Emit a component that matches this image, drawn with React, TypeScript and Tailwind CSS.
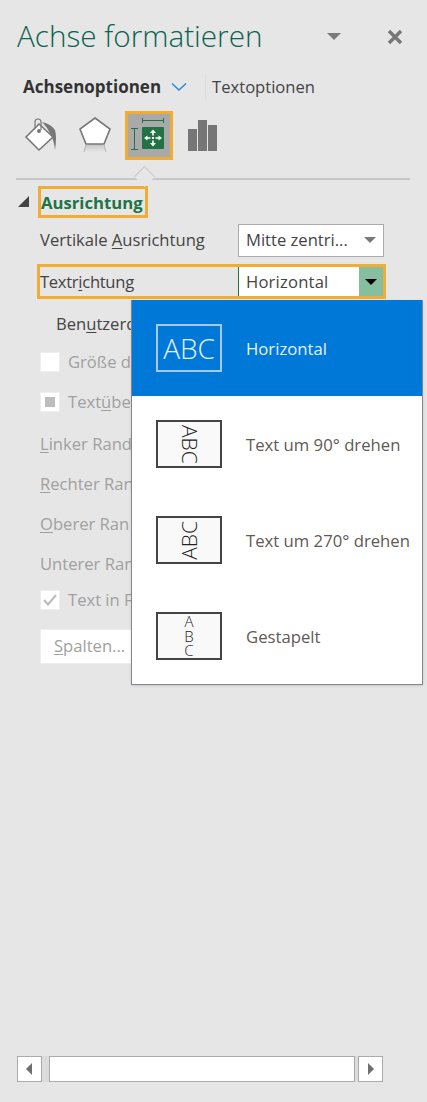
const font = "font-['Open_Sans','Noto_Sans',sans-serif]";

function Bucket() {
  return (
    <svg width="34" height="36" viewBox="0 0 34 36" fill="none">
      <path d="M2 20 L15 7 L29 20 L15 33 Z" fill="#fff" stroke="#777" strokeWidth="1.6" />
      <path d="M11 12 V5 Q11 2 14 2 Q17 2 17 5 V13" stroke="#777" strokeWidth="1.2" />
      <circle cx="15" cy="14" r="2" fill="#777" />
      <path d="M18 5 Q27 7 31 13 Q33 20 31 33 Q30 24 27 18 Q24 11 18 5Z" fill="#777" />
    </svg>
  );
}

function Pentagon() {
  return (
    <svg width="34" height="38" viewBox="0 0 34 38" fill="none">
      <defs>
        <linearGradient id="shadow" x1="0" y1="0" x2="0" y2="1">
          <stop offset="0" stopColor="#c4c4c4" />
          <stop offset="1" stopColor="#e6e6e6" />
        </linearGradient>
      </defs>
      <rect x="7" y="28" width="20" height="8" fill="url(#shadow)" />
      <path d="M17 2 L32 13 L26 28 H8 L2 13 Z" fill="#fff" stroke="#777" strokeWidth="1.6" />
      <path d="M8 28 L6 36 M26 28 L28 36" stroke="#b5b5b5" strokeWidth="1" />
    </svg>
  );
}

function SizeIcon() {
  return (
    <svg width="38" height="36" viewBox="0 0 38 36" fill="none">
      <path d="M12.5 1 V6 M33.5 1 V6 M12.5 3.5 H33.5 M1 11.5 H8 M1 32.5 H8 M4.5 11.5 V32.5" stroke="#217346" strokeWidth="1" />
      <rect x="12" y="10" width="22" height="22" rx="1" fill="#217346" />
      <path d="M23 15 V18.5 M23 23.5 V27 M16 21 H20.5 M25.5 21 H30" stroke="#fff" strokeWidth="1.6" />
      <path d="M23 12.5 L20 16 H26 Z M23 29.5 L20 26 H26 Z M14 21 L17.5 18.5 V23.5 Z M32 21 L28.5 18.5 V23.5 Z" fill="#fff" />
      <rect x="22" y="20" width="2" height="2" fill="#fff" />
    </svg>
  );
}

function Bars() {
  return (
    <svg width="30" height="32" viewBox="0 0 30 32" fill="#767676">
      <rect x="0" y="10" width="9" height="22" />
      <rect x="10" y="1" width="9" height="31" />
      <rect x="20" y="6" width="9" height="26" />
    </svg>
  );
}

function Caret({ className }: { className: string }) {
  return <span className={`h-0 w-0 border-x-[6px] border-t-[6px] border-x-transparent ${className}`} />;
}

function MutedRow({ children }: { children: React.ReactNode }) {
  return <div className="flex h-10 items-center whitespace-nowrap pl-10 text-[#a0a0a0]">{children}</div>;
}

function Check({ children, label }: { children?: React.ReactNode; label: React.ReactNode }) {
  return (
    <div className="flex h-10 items-center whitespace-nowrap pl-10 text-[#a0a0a0]">
      <span className="mr-[8px] flex h-[20px] w-[20px] items-center justify-center border border-[#eeeeee] bg-white">{children}</span>
      <span>{label}</span>
    </div>
  );
}

function MenuItem({ label, active, children }: { label: string; active?: boolean; children: React.ReactNode }) {
  return (
    <div className={`flex h-[96px] items-center pl-[24px] ${active ? "bg-[#0078d7] text-[#e6f0fa]" : "bg-white text-[#5f5a55]"}`}>
      <div className={`flex h-[48px] w-[66px] shrink-0 items-center justify-center overflow-hidden border-2 ${active ? "border-[#a5cbec]" : "border-[#444] bg-[#f9f9f9]"}`}>
        {children}
      </div>
      <span className="ml-[24px] whitespace-nowrap pt-[1px] text-[16.7px]">{label}</span>
    </div>
  );
}

export default function App() {
  return (
    <div className={`relative flex h-[1102px] w-[427px] flex-col overflow-hidden bg-[#e6e6e6] text-[16.6px] text-[#444] ${font}`}>
      {/* header */}
      <div className="flex h-[72px] items-center pl-[17px] pt-[1px]">
        <h1 className="w-[246px] whitespace-nowrap text-[29.7px] font-light text-[#0b6350]">Achse formatieren</h1>
        <Caret className="ml-[64px] border-t-[#7a7a7a] border-x-[7px] border-t-[7px]" />
        <svg className="ml-[46px]" width="16" height="16" viewBox="0 0 16 16">
          <path d="M2 2 L14 14 M14 2 L2 14" stroke="#777" strokeWidth="3.4" />
        </svg>
      </div>

      {/* tabs */}
      <div className="flex h-[30px] items-center pl-[23px]">
        <span className="text-[17px] font-bold text-[#333]">Achsenoptionen</span>
        <svg className="ml-[10px]" width="16" height="10" viewBox="0 0 16 10" fill="none">
          <path d="M1 1.5 L8 8 L15 1.5" stroke="#2b88d8" strokeWidth="1.5" />
        </svg>
        <span className="ml-[18px] h-[26px] w-px bg-[#dcdcdc]" />
        <span className="ml-[6px] text-[#444]">Textoptionen</span>
      </div>

      {/* icon tabs */}
      <div className="mt-[8px] flex h-[50px] items-center pl-[24px]">
        <Bucket />
        <span className="ml-[20px]"><Pentagon /></span>
        <span className="ml-[13px] flex h-[49px] w-[48px] items-center justify-center border-[3px] border-[#f0ad36] bg-[#a9a9a9]">
          <SizeIcon />
        </span>
        <span className="ml-[15px]"><Bars /></span>
      </div>

      {/* divider with notch */}
      <div className="relative mx-[16px] mt-[18px] h-[2px] w-[394px] bg-[#c6c6c6]">
        <span className="absolute left-[121px] top-[-9px] h-[15px] w-[15px] rotate-45 border-l border-t border-[#c6c6c6] bg-[#e6e6e6]" />
      </div>

      {/* section */}
      <div className="mt-[5px] flex h-[33px] items-center pl-[18px]">
        <span className="h-0 w-0 border-b-[11px] border-l-[11px] border-b-[#444] border-l-transparent" />
        <span className="ml-[9px] flex h-[32px] w-[110px] items-center whitespace-nowrap border-[3px] border-[#f0ad36] pt-[3px] text-[16.7px] font-bold text-[#217346]">Ausrichtung</span>
      </div>

      <div className="mt-[5px] flex h-[34px] items-center pl-[40px]">
        <span className="w-[198px] whitespace-nowrap">Vertikale <u className="underline-offset-2">A</u>usrichtung</span>
        <div className="flex h-[33px] w-[146px] items-center justify-between border border-[#ababab] bg-white pl-[7px] pr-[7px]">
          <span className="whitespace-nowrap">Mitte zentri...</span>
          <Caret className="border-t-[#7a7a7a] border-x-[5px] border-t-[6px]" />
        </div>
      </div>

      <div className="ml-[37px] mt-[7px] flex h-[35px] w-[349px] items-stretch border-[3px] border-[#f0ad36]">
        <span className="flex w-[198px] items-center whitespace-nowrap pt-[2px] tracking-[-0.3px]">Textr<u className="underline-offset-2">i</u>chtung</span>
        <div className="flex flex-1 items-center border-l border-[#217346] bg-white pl-[7px] pt-[2px] tracking-[0.2px]">Horizontal</div>
        <div className="flex w-[24px] items-center justify-center bg-[#86bf9f]">
          <Caret className="border-t-black" />
        </div>
      </div>

      {/* rows behind the open menu, only the part that shows */}
      <div className="mt-[7px] flex h-[36px] items-center whitespace-nowrap pl-[56px]">
        Ben<u className="underline-offset-2">u</u>tzerd
      </div>
      <Check label="Größe d" />
      <Check label={<>Text<u className="underline-offset-2">ü</u>ber</>}>
        <span className="h-[10px] w-[10px] bg-[#bdbdbd]" />
      </Check>
      <div className="mt-[2px]">
        <MutedRow><u className="underline-offset-2">L</u>inker Rand</MutedRow>
        <MutedRow><u className="underline-offset-2">R</u>echter Ran</MutedRow>
        <MutedRow><u className="underline-offset-2">O</u>berer Ran</MutedRow>
        <MutedRow>Unterer Ran</MutedRow>
      </div>
      <div className="-mt-[4px]">
        <Check label="Text in F">
          <svg width="14" height="12" viewBox="0 0 14 12" fill="none">
            <path d="M1 6 L5 10.5 L13 1" stroke="#bdbdbd" strokeWidth="2.2" />
          </svg>
        </Check>
      </div>
      <div className="ml-[40px] mt-[9px] flex h-[35px] w-[100px] items-center border border-[#eeeeee] bg-white pl-[13px] text-[#a0a0a0]">
        <span><u className="underline-offset-2">S</u>palten...</span>
      </div>

      {/* scrollbar */}
      <div className="mb-[20px] ml-[17px] mt-auto flex h-[26px] w-[366px] bg-[#dcdcdc]">
        <div className="flex h-[26px] w-[25px] items-center justify-center border border-[#ababab] bg-white">
          <span className="h-0 w-0 border-y-[6px] border-r-[6px] border-y-transparent border-r-[#6f6f6f]" />
        </div>
        <div className="ml-[7px] h-[26px] w-[307px] border border-[#ababab] bg-white" />
        <div className="ml-[3px] flex h-[26px] w-[25px] items-center justify-center border border-[#ababab] bg-white">
          <span className="h-0 w-0 border-y-[6px] border-l-[6px] border-y-transparent border-l-[#6f6f6f]" />
        </div>
      </div>

      {/* open dropdown */}
      <div className="absolute left-[131px] top-[300px] w-[292px] border border-t-0 border-[#84868c] bg-white shadow-sm">
        <MenuItem label="Horizontal" active>
          <span className="text-[28px] font-light leading-none">ABC</span>
        </MenuItem>
        <MenuItem label="Text um 90° drehen">
          <span className="whitespace-nowrap text-[21px] font-light leading-none text-[#222] [writing-mode:vertical-rl]">ABC</span>
        </MenuItem>
        <MenuItem label="Text um 270° drehen">
          <span className="rotate-180 whitespace-nowrap text-[21px] font-light leading-none text-[#222] [writing-mode:vertical-rl]">ABC</span>
        </MenuItem>
        <MenuItem label="Gestapelt">
          <span className="w-[12px] break-all text-center text-[15px] font-light leading-[14.5px] text-[#222]">ABC</span>
        </MenuItem>
      </div>
    </div>
  );
}
